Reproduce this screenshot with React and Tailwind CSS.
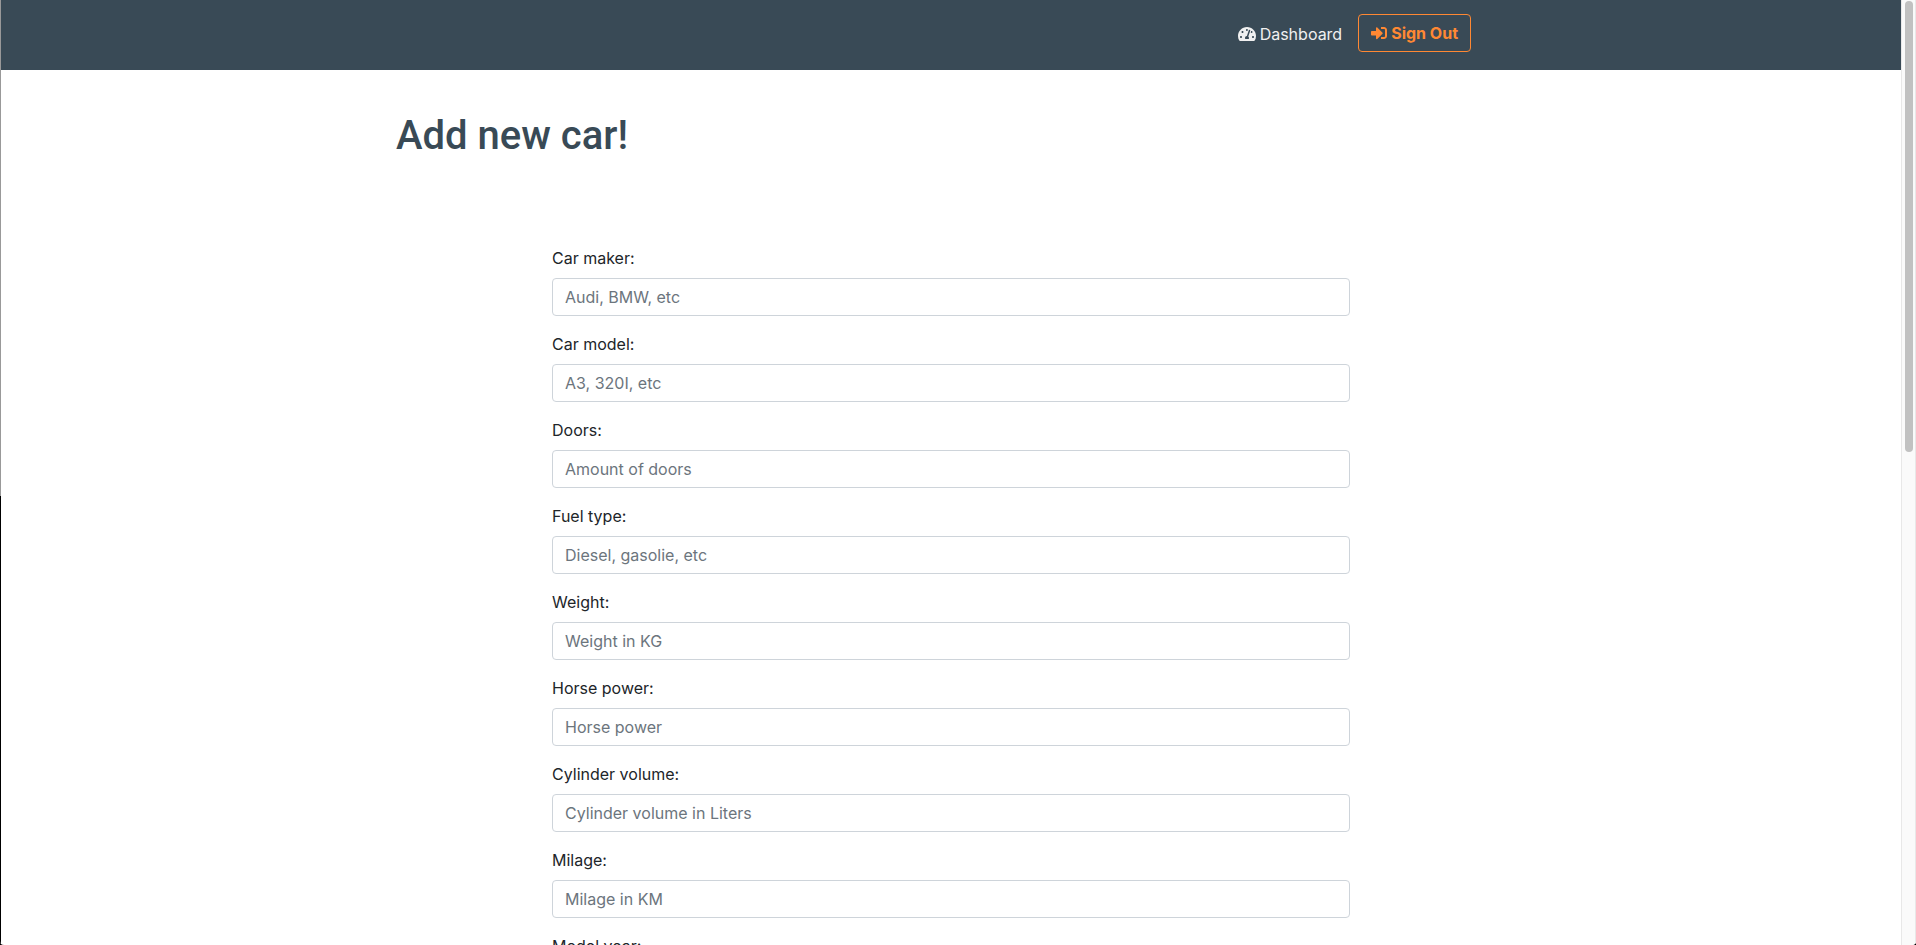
import { FaSignInAlt, FaTachometerAlt } from "react-icons/fa";

const fields = [
  { id: "maker", label: "Car maker:", placeholder: "Audi, BMW, etc" },
  { id: "model", label: "Car model:", placeholder: "A3, 320I, etc" },
  { id: "doors", label: "Doors:", placeholder: "Amount of doors" },
  { id: "fuel", label: "Fuel type:", placeholder: "Diesel, gasolie, etc" },
  { id: "weight", label: "Weight:", placeholder: "Weight in KG" },
  { id: "power", label: "Horse power:", placeholder: "Horse power" },
  { id: "cylinder", label: "Cylinder volume:", placeholder: "Cylinder volume in Liters" },
  { id: "milage", label: "Milage:", placeholder: "Milage in KM" },
  { id: "year", label: "Model year:", placeholder: "Model year" },
];

function Field({ id, label, placeholder }) {
  return (
    <div className="flex flex-col gap-2">
      <label htmlFor={id}>{label}</label>
      <input
        id={id}
        type="text"
        placeholder={placeholder}
        className="h-[38px] w-full rounded border border-[#ced4da] bg-white px-3 placeholder:text-[#6c757d] placeholder:opacity-100"
      />
    </div>
  );
}

function Navbar() {
  return (
    <header className="bg-[#394a56]">
      <nav className="mx-auto flex h-[70px] max-w-[1140px] items-start justify-end gap-4 pt-3.5 pr-[50px]">
        <a href="#dashboard" className="flex h-10 items-center gap-1 text-[#f0f0f0]">
          <FaTachometerAlt className="h-4 w-[18px]" />
          Dashboard
        </a>
        <button
          type="button"
          className="flex h-[38px] items-center gap-1 rounded border border-[#ff8833] px-3 font-bold text-[#ff8833]"
        >
          <FaSignInAlt className="size-4" />
          Sign Out
        </button>
      </nav>
    </header>
  );
}

function Scrollbar() {
  return (
    <div aria-hidden="true" className="flex w-[15px] shrink-0 justify-center border-x border-[#e8e8e8] bg-[#fafafa] pt-px">
      <div className="h-[47.8%] w-2 rounded-full bg-[#c1c1c1]" />
    </div>
  );
}

export default function App() {
  return (
    <div className="flex h-screen overflow-hidden bg-black">
      <div className="flex flex-1 overflow-hidden rounded-b bg-white font-['Inter',sans-serif] text-base text-[#212529]">
        <div aria-hidden="true" className="flex w-px shrink-0 flex-col">
          <div className="h-[52.5%] bg-[#999999]" />
          <div className="flex-1 bg-black" />
        </div>
        <div className="min-w-0 flex-1 overflow-hidden">
          <Navbar />
          <main className="mx-auto max-w-[1140px] px-[15px] pt-[42px]">
            <h1 className="font-['Roboto',sans-serif] text-[40px] leading-12 font-medium text-[#394a56]">Add new car!</h1>
            <form className="mx-auto mt-[86px] flex max-w-[798px] flex-col gap-4">
              {fields.map((field) => (
                <Field key={field.id} {...field} />
              ))}
            </form>
          </main>
        </div>
        <Scrollbar />
      </div>
    </div>
  );
}
